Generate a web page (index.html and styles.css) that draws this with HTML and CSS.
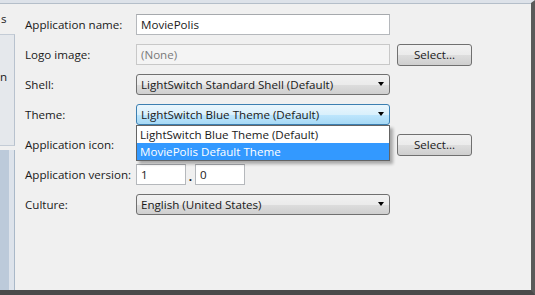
FILE: index.html
```html
<!DOCTYPE html>
<html lang="en">
<head>
    <meta charset="UTF-8">
    <title>Application Properties</title>
    <link rel="stylesheet" href="styles.css">
</head>
<body>
    <div class="window">
        <div class="sidebar">
            <div class="side-top">s</div>
            <div class="side-box"><span class="side-n">n</span></div>
            <div class="side-bottom">
                <div class="side-dark"></div>
                <div class="side-light"></div>
            </div>
        </div>
        <div class="content">
            <form class="props">
                <label>Application name:</label>
                <div class="textbox">MoviePolis</div>
                <div></div>

                <label>Logo image:</label>
                <div class="textbox disabled">(None)</div>
                <button type="button" class="btn">Select...</button>

                <label>Shell:</label>
                <div class="combo">LightSwitch Standard Shell (Default)<span class="arrow"></span></div>
                <div></div>

                <label>Theme:</label>
                <div class="combo-wrap">
                    <div class="combo active">LightSwitch Blue Theme (Default)<span class="arrow"></span></div>
                    <ul class="popup">
                        <li>LightSwitch Blue Theme (Default)</li>
                        <li class="selected">MoviePolis Default Theme</li>
                    </ul>
                </div>
                <div></div>

                <label>Application icon:</label>
                <div class="textbox disabled"></div>
                <button type="button" class="btn">Select...</button>

                <label>Application version:</label>
                <div class="version">
                    <div class="textbox small">1</div>
                    <span class="dot">.</span>
                    <div class="textbox small">0</div>
                </div>
                <div></div>

                <label>Culture:</label>
                <div class="combo">English (United States)<span class="arrow"></span></div>
                <div></div>
            </form>
        </div>
    </div>
</body>
</html>
```

FILE: styles.css
```css
html, body {
    margin: 0;
    padding: 0;
}

body {
    width: 535px;
    height: 295px;
    background-color: #f0f0f0;
    font-family: "Segoe UI", "Open Sans", "Noto Sans", sans-serif;
    font-size: 11.6px;
    color: #1a1a1a;
    overflow: hidden;
}

.window {
    box-sizing: border-box;
    width: 535px;
    height: 295px;
    display: grid;
    grid-template-columns: 15px 1fr;
    border-top: 3px solid #dde2e9;
    border-right: 4px solid #5a5a5a;
    border-bottom: 5px solid #4a4a4a;
    box-shadow: inset 0 1px 0 #b4bec9;
}

.sidebar {
    display: flex;
    flex-direction: column;
    padding-top: 1px;
}

.side-top {
    height: 30px;
    line-height: 30px;
    padding-left: 1px;
}

.side-box {
    height: 110px;
    background-color: #e5e8ec;
    border-top: 1px solid #c4ccd6;
    border-right: 1px solid #b8c2ce;
    border-bottom: 1px solid #c4ccd6;
    position: relative;
}

.side-n {
    position: absolute;
    left: 0;
    top: 34px;
}

.side-bottom {
    flex: 1;
    display: flex;
    margin-top: 4px;
    border-right: 1px solid #a9b8c8;
}

.side-dark {
    width: 9px;
    background-color: #bccada;
}

.side-light {
    flex: 1;
    background-color: #dde3eb;
}

.content {
    padding: 11px 0 0 10px;
}

.props {
    display: grid;
    grid-template-columns: 104px 254px 75px;
    grid-auto-rows: 21px;
    column-gap: 7px;
    row-gap: 9px;
    align-items: center;
}

label {
    line-height: 21px;
    white-space: nowrap;
}

.textbox {
    box-sizing: border-box;
    height: 21px;
    line-height: 19px;
    padding-left: 4px;
    background-color: #fff;
    border: 1px solid #b5b8bc;
    border-top-color: #a6a9ad;
}

.textbox.disabled {
    background-color: #f4f4f4;
    border-color: #c8c8c8;
    color: #7a7a7a;
}

.version {
    display: flex;
    align-items: flex-end;
}

.textbox.small {
    width: 50px;
}

.dot {
    width: 9px;
    text-align: center;
    font-weight: bold;
    line-height: 16px;
}

.btn {
    box-sizing: border-box;
    height: 22px;
    width: 75px;
    font-family: inherit;
    font-size: 11.6px;
    color: #1a1a1a;
    border: 1px solid #707070;
    border-radius: 3px;
    background: linear-gradient(#f2f2f2 0%, #ebebeb 50%, #dddddd 51%, #cfcfcf 100%);
}

.combo {
    box-sizing: border-box;
    height: 21px;
    line-height: 19px;
    padding-left: 4px;
    position: relative;
    border: 1px solid #707070;
    border-radius: 3px;
    background: linear-gradient(#f2f2f2 0%, #ebebeb 50%, #dddddd 51%, #cfcfcf 100%);
}

.combo.active {
    border-color: #3c7fb1;
    background: linear-gradient(#eaf6fd 0%, #d9f0fc 50%, #bee6fd 51%, #a7d9f5 100%);
}

.arrow {
    position: absolute;
    right: 5px;
    top: 7px;
    width: 0;
    height: 0;
    border-left: 3.5px solid transparent;
    border-right: 3.5px solid transparent;
    border-top: 4px solid #000;
}

.combo-wrap {
    position: relative;
    height: 21px;
}

.popup {
    position: absolute;
    left: 0;
    top: 21px;
    width: 254px;
    box-sizing: border-box;
    margin: 0;
    padding: 0;
    list-style: none;
    background-color: #fff;
    border: 1px solid #646464;
    box-shadow: 3px 3px 3px rgba(0, 0, 0, 0.3);
    z-index: 2;
}

.popup li {
    height: 17px;
    line-height: 17px;
    padding-left: 3px;
}

.popup li.selected {
    background-color: #3399ff;
    color: #fff;
}
```
